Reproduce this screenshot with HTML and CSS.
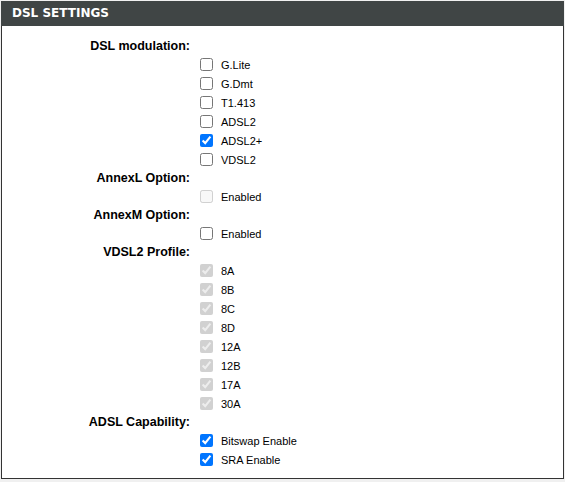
FILE: index.html
```html
<!DOCTYPE html>
<html>

<head>
  <title>DSL Settings</title>
  <link rel="stylesheet" href="styles.css">
</head>

<body>
  <div class="panel">
    <div class="panel-title">DSL SETTINGS</div>
    <div class="panel-body">
      <div class="field-label">DSL modulation:</div>
      <label class="option"><input type="checkbox"><span>G.Lite</span></label>
      <label class="option"><input type="checkbox"><span>G.Dmt</span></label>
      <label class="option"><input type="checkbox"><span>T1.413</span></label>
      <label class="option"><input type="checkbox"><span>ADSL2</span></label>
      <label class="option"><input type="checkbox" checked><span>ADSL2+</span></label>
      <label class="option"><input type="checkbox"><span>VDSL2</span></label>

      <div class="field-label">AnnexL Option:</div>
      <label class="option"><input type="checkbox" disabled><span>Enabled</span></label>

      <div class="field-label">AnnexM Option:</div>
      <label class="option"><input type="checkbox"><span>Enabled</span></label>

      <div class="field-label">VDSL2 Profile:</div>
      <label class="option"><input type="checkbox" checked disabled><span>8A</span></label>
      <label class="option"><input type="checkbox" checked disabled><span>8B</span></label>
      <label class="option"><input type="checkbox" checked disabled><span>8C</span></label>
      <label class="option"><input type="checkbox" checked disabled><span>8D</span></label>
      <label class="option"><input type="checkbox" checked disabled><span>12A</span></label>
      <label class="option"><input type="checkbox" checked disabled><span>12B</span></label>
      <label class="option"><input type="checkbox" checked disabled><span>17A</span></label>
      <label class="option"><input type="checkbox" checked disabled><span>30A</span></label>

      <div class="field-label">ADSL Capability:</div>
      <label class="option"><input type="checkbox" checked><span>Bitswap Enable</span></label>
      <label class="option"><input type="checkbox" checked><span>SRA Enable</span></label>
    </div>
  </div>
</body>

</html>
```

FILE: styles.css
```css
body {
  margin: 0;
  padding: 1px;
  background-color: #f0f0f0;
  font-family: "Liberation Sans", Arial, sans-serif;
  color: #000;
}

.panel {
  background-color: #ffffff;
  border: 1px solid #333;
  border-top: none;
}

.panel-title {
  background-color: #404545;
  color: #ffffff;
  font-family: "DejaVu Sans", Verdana, sans-serif;
  font-size: 12px;
  font-weight: bold;
  height: 25px;
  line-height: 25px;
  padding-left: 11px;
  margin: 0 -1px;
}

.panel-body {
  padding: 11px 0 9px 0;
}

.field-label {
  width: 188px;
  text-align: right;
  font-size: 12.5px;
  font-weight: bold;
  height: 18px;
  line-height: 18px;
}

.option {
  display: flex;
  align-items: center;
  height: 19px;
  padding-left: 194px;
  font-size: 11px;
}

.option input {
  margin: 3px 3px 3px 4px;
}

.option span {
  margin-left: 5px;
}
```
